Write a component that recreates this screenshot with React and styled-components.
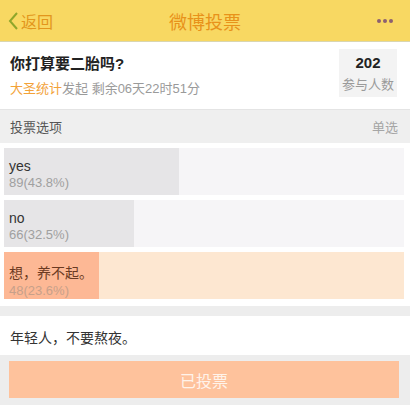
import React from "react";
import styled, { createGlobalStyle } from "styled-components";

const GlobalStyle = createGlobalStyle`
  html, body {
    margin: 0;
    padding: 0;
    background: #ededed;
    font-family: "Liberation Sans", "Noto Sans CJK SC", sans-serif;
  }
`;

const Page = styled.div`
  width: 410px;
  height: 405px;
  overflow: hidden;
  background: #ededed;
`;

const NavBar = styled.div`
  height: 41px;
  background: #f8d862;
  border-bottom: 1px solid #d9d6b0;
  display: flex;
  align-items: center;
  justify-content: space-between;
  padding: 0 17px 0 8px;
  position: relative;
`;

const Back = styled.div`
  display: flex;
  align-items: center;
  gap: 1px;
  color: #e3961c;
  font-size: 16px;
`;

const NavTitle = styled.div`
  position: absolute;
  left: 0;
  right: 0;
  text-align: center;
  color: #e8921a;
  font-size: 18px;
  pointer-events: none;
`;

const Dots = styled.div`
  display: flex;
  gap: 2px;
  span {
    width: 4px;
    height: 4px;
    border-radius: 50%;
    background: #8c6070;
  }
`;

const Question = styled.div`
  background: #fff;
  height: 68px;
  display: flex;
  align-items: flex-start;
  justify-content: space-between;
  padding: 0 13px 0 10px;
  border-bottom: 1px solid #e4e4e4;
  box-sizing: border-box;
`;

const QText = styled.div`
  display: flex;
  flex-direction: column;
  gap: 5px;
  padding-top: 10px;
`;

const QTitle = styled.div`
  font-size: 15px;
  color: #222;
  font-weight: bold;
`;

const Meta = styled.div`
  font-size: 13px;
  color: #9a9a9a;
  b {
    font-weight: normal;
    color: #f3a238;
  }
`;

const Count = styled.div`
  width: 58px;
  height: 48px;
  background: #f3f3f3;
  display: flex;
  flex-direction: column;
  align-items: center;
  justify-content: center;
  gap: 3px;
  margin-top: 7px;
  strong {
    font-size: 15px;
    color: #222;
  }
  span {
    font-size: 13px;
    color: #9a9a9a;
  }
`;

const SectionHead = styled.div`
  height: 33px;
  background: #efefef;
  display: flex;
  align-items: center;
  justify-content: space-between;
  padding: 0 12px 0 10px;
  font-size: 13px;
  color: #555;
  span {
    color: #a5a5a5;
  }
`;

const Options = styled.div`
  background: #fff;
  padding: 5px 6px 7px 4px;
  display: flex;
  flex-direction: column;
  gap: 5px;
`;

const Option = styled.div`
  position: relative;
  height: 47px;
  background: ${(p) => (p.$mine ? "#fde7d1" : "#f6f5f7")};
  overflow: hidden;
`;

const Fill = styled.div`
  position: absolute;
  left: 0;
  top: 0;
  bottom: 0;
  background: ${(p) => (p.$mine ? "#fdb895" : "#e6e5e7")};
`;

const OptText = styled.div`
  position: relative;
  padding: 10px 0 0 5px;
  display: flex;
  flex-direction: column;
  gap: 1px;
`;

const OptLabel = styled.div`
  font-size: 14px;
  color: ${(p) => (p.$mine ? "#6b3a22" : "#333")};
`;

const OptCount = styled.div`
  font-size: 13px;
  color: ${(p) => (p.$mine ? "#c7a08a" : "#a0a0a0")};
`;

const Comment = styled.div`
  margin-top: 10px;
  background: #fff;
  height: 37px;
  display: flex;
  align-items: center;
  padding: 2px 0 0 10px;
  font-size: 14px;
  color: #333;
`;

const Footer = styled.div`
  padding: 6px 11px 0 9px;
`;

const Voted = styled.div`
  height: 37px;
  background: #fec29c;
  color: #fff3ea;
  font-size: 16px;
  display: flex;
  align-items: center;
  justify-content: center;
`;

const options = [
  { label: "yes", count: "89(43.8%)", width: 175 },
  { label: "no", count: "66(32.5%)", width: 130 },
  { label: "想，养不起。", count: "48(23.6%)", width: 95, mine: true },
];

export default function App() {
  return (
    <Page>
      <GlobalStyle />
      <NavBar>
        <Back>
          <svg width="12" height="20" viewBox="0 0 12 20">
            <path d="M9 2 L2 10 L9 18" fill="none" stroke="#8fa62a" strokeWidth="2" />
          </svg>
          返回
        </Back>
        <NavTitle>微博投票</NavTitle>
        <Dots>
          <span />
          <span />
          <span />
        </Dots>
      </NavBar>
      <Question>
        <QText>
          <QTitle>你打算要二胎吗?</QTitle>
          <Meta>
            <b>大圣统计</b>发起 剩余06天22时51分
          </Meta>
        </QText>
        <Count>
          <strong>202</strong>
          <span>参与人数</span>
        </Count>
      </Question>
      <SectionHead>
        投票选项<span>单选</span>
      </SectionHead>
      <Options>
        {options.map((o) => (
          <Option key={o.label} $mine={o.mine}>
            <Fill $mine={o.mine} style={{ width: o.width }} />
            <OptText>
              <OptLabel $mine={o.mine}>{o.label}</OptLabel>
              <OptCount $mine={o.mine}>{o.count}</OptCount>
            </OptText>
          </Option>
        ))}
      </Options>
      <Comment>年轻人，不要熬夜。</Comment>
      <Footer>
        <Voted>已投票</Voted>
      </Footer>
    </Page>
  );
}
